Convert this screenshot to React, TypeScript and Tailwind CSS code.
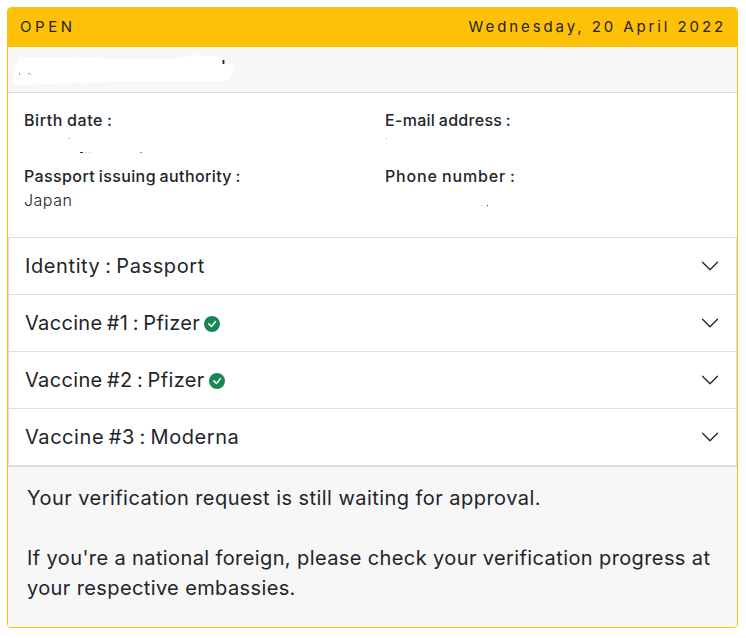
import React from "react";

interface FieldProps {
  label: string;
  labelClass: string;
  value?: React.ReactNode;
}

const Field: React.FC<FieldProps> = ({ label, labelClass, value }) => (
  <div>
    <div
      className={`h-6 leading-[22px] font-medium whitespace-nowrap ${labelClass}`}
    >
      {label}
    </div>
    <div className="h-6 leading-[22px]">{value}</div>
  </div>
);

interface AccordionItemProps {
  title: string;
  titleClass: string;
  verified?: boolean;
}

const AccordionItem: React.FC<AccordionItemProps> = ({
  title,
  titleClass,
  verified,
}) => (
  <button className="flex items-center w-full h-[57px] px-4 border-b border-[#dfdfdf] text-left">
    <span
      className={`text-[20px] [word-spacing:-1.5px] whitespace-nowrap ${titleClass}`}
    >
      {title}
    </span>
    {verified && (
      <svg
        className="w-4 h-4 ml-1 mt-0.5 shrink-0 text-[#198754]"
        viewBox="0 0 16 16"
        fill="currentColor"
      >
        <path d="M16 8A8 8 0 1 1 0 8a8 8 0 0 1 16 0zm-3.97-3.03a.75.75 0 0 0-1.08.022L7.477 9.417 5.384 7.323a.75.75 0 0 0-1.06 1.06L6.97 11.03a.75.75 0 0 0 1.079-.02l3.992-4.99a.75.75 0 0 0-.01-1.05z" />
      </svg>
    )}
    <svg
      className="w-5 h-5 ml-auto shrink-0"
      viewBox="0 0 16 16"
      fill="#212529"
    >
      <path d="M1.646 4.646a.5.5 0 0 1 .708 0L8 10.293l5.646-5.647a.5.5 0 0 1 .708.708l-6 6a.5.5 0 0 1-.708 0l-6-6a.5.5 0 0 1 0-.708z" />
    </svg>
  </button>
);

export default function App() {
  return (
    <div className="h-[638px] bg-white p-[7px] font-['Inter',sans-serif] text-[#212529]">
      <div className="flex flex-col w-[731px] h-[621px] border border-[#ffc107] rounded overflow-hidden bg-white">
        <div className="flex items-center justify-between h-[39px] shrink-0 pl-3 pr-[11px] bg-[#ffc107] text-[15px]">
          <span className="tracking-[3.6px]">OPEN</span>
          <span className="tracking-[2.9px]">Wednesday, 20 April 2022</span>
        </div>

        {/* name, redacted */}
        <div className="h-[46px] shrink-0 bg-[#f7f7f7] border-b border-[#d8d8d8]">
          <svg className="block" width="240" height="45" viewBox="8 47 240 45">
            <path
              d="M22 57Q17 57 18 63Q14 66 15 71Q12 77 14 82Q16 86 24 85L78 83Q92 84 113 81L226 81Q231 79 231 75Q235 71 233 67Q230 63 222 63Q220 56 212 56L190 55Q180 60 160 59L110 59Q88 56 60 57Z"
              fill="#fff"
            />
            <path d="M222 60h1v4h-1z" fill="#999" />
            <path d="M223 60h1v4h-1z" fill="#212529" />
            <path d="M224 60h1v4h-1z" fill="#79b4e3" />
            <path d="M19 73h1v2h-1zM28 73h2v1h-2zM30 74h1v1h-1z" fill="#999" />
          </svg>
        </div>

        <div className="grid grid-cols-[361px_1fr] gap-y-2 h-[144px] shrink-0 content-start pl-4 pt-4 text-[16px]">
          <Field
            label="Birth date :"
            labelClass="tracking-[0.6px] [word-spacing:-1px]"
            value={
              <svg className="block" width="220" height="24" viewBox="24 133 220 24">
                <path d="M68 138h2v1h-2z" fill="#d9c0ae" />
                <path d="M80 152h3v1h-3z" fill="#333" />
                <path d="M85 152h1v1h-1zM89 152h1v1h-1z" fill="#bbb" />
                <path d="M140 152h2v1h-2z" fill="#c98b4a" />
              </svg>
            }
          />
          <Field
            label="E-mail address :"
            labelClass="tracking-[0.3px] [word-spacing:-1px]"
            value={
              <svg className="block" width="20" height="24" viewBox="385 133 20 24">
                <path d="M386 138h1v1h-1z" fill="#c8a0a8" />
              </svg>
            }
          />
          <Field
            label="Passport issuing authority :"
            labelClass="tracking-[0.39px] [word-spacing:-1px]"
            value={<span className="font-light tracking-[0.5px]">Japan</span>}
          />
          <Field
            label="Phone number :"
            labelClass="tracking-[0.85px] [word-spacing:-1px]"
            value={
              <svg className="block" width="120" height="24" viewBox="385 189 120 24">
                <path d="M481 205h2v1h-2z" fill="#ddd" />
                <path d="M487 205h1v1h-1z" fill="#333" />
              </svg>
            }
          />
        </div>

        <div className="shrink-0 border-t border-x border-[#dfdfdf]">
          <AccordionItem title="Identity : Passport" titleClass="tracking-[0.6px]" />
          <AccordionItem title="Vaccine #1 : Pfizer" titleClass="tracking-[0.32px]" verified />
          <AccordionItem title="Vaccine #2 : Pfizer" titleClass="tracking-[0.34px]" verified />
          <AccordionItem title="Vaccine #3 : Moderna" titleClass="tracking-[0.56px]" />
        </div>

        <div className="flex-1 border-t border-[#d8d8d8] bg-[#f7f7f7] pl-[19px] pt-4 text-[20px] leading-[30px] whitespace-nowrap">
          <p className="tracking-[0.45px]">
            Your verification request is still waiting for approval.
          </p>
          <p className="mt-[30px] tracking-[0.39px]">
            If you're a national foreign, please check your verification progress at
          </p>
          <p className="tracking-[0.38px]">your respective embassies.</p>
        </div>
      </div>
    </div>
  );
}
